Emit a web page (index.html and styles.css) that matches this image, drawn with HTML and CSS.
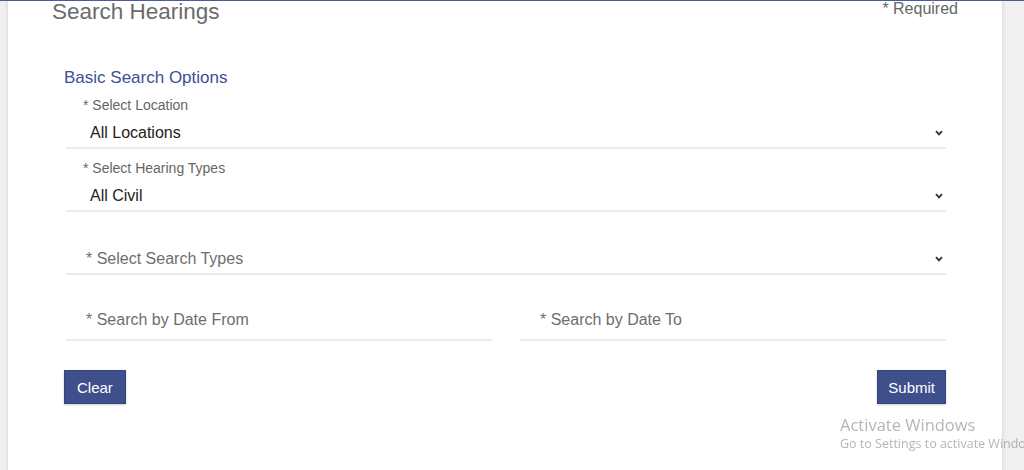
FILE: index.html
```html
<!DOCTYPE html>
<html lang="en">
<head>
  <meta charset="UTF-8" />
  <title>Search Hearings</title>
  <link rel="stylesheet" href="styles.css">
</head>
<body>
  <div class="card">
    <!-- Kopfzeile -->
    <div class="card-head">
      <h2 class="title">Search Hearings</h2>
      <span class="required">* Required</span>
    </div>

    <form class="search-form">
      <h3 class="section-title">Basic Search Options</h3>

      <div class="field">
        <label class="field-label">* Select Location</label>
        <div class="select-row">
          <span class="value">All Locations</span>
          <svg class="caret" viewBox="0 0 8 6" width="8" height="6"><polyline points="1,1.2 4,4.3 7,1.2" /></svg>
        </div>
      </div>

      <div class="field">
        <label class="field-label">* Select Hearing Types</label>
        <div class="select-row">
          <span class="value">All Civil</span>
          <svg class="caret" viewBox="0 0 8 6" width="8" height="6"><polyline points="1,1.2 4,4.3 7,1.2" /></svg>
        </div>
      </div>

      <div class="field field-empty">
        <div class="select-row">
          <span class="placeholder">* Select Search Types</span>
          <svg class="caret" viewBox="0 0 8 6" width="8" height="6"><polyline points="1,1.2 4,4.3 7,1.2" /></svg>
        </div>
      </div>

      <div class="date-row">
        <div class="date-field"><span class="placeholder">* Search by Date From</span></div>
        <div class="date-field"><span class="placeholder">* Search by Date To</span></div>
      </div>

      <div class="actions">
        <button type="button" class="btn">Clear</button>
        <button type="button" class="btn btn-submit">Submit</button>
      </div>
    </form>
  </div>

  <!-- Windows-Wasserzeichen -->
  <div class="watermark">
    <div class="wm-title">Activate Windows</div>
    <div class="wm-text">Go to Settings to activate Windows.</div>
  </div>
</body>
</html>
```

FILE: styles.css
```css
/* --- Grunddesign --- */
body {
  margin: 0;
  padding: 0;
  font-family: "Liberation Sans", Arial, sans-serif;
  background: #f0f0f0;
  border-top: 1px solid #4a5a9c;
  overflow: hidden;
}

/* --- Karte --- */
.card {
  margin: -1px 22px 0 8px;
  min-height: 480px;
  background: #fff;
  box-shadow: 0 0 4px rgba(0, 0, 0, 0.15);
}

.card-head {
  display: flex;
  justify-content: space-between;
  align-items: flex-start;
  padding: 0 44px;
}
.title {
  margin: 0;
  font-size: 22.5px;
  font-weight: normal;
  line-height: 24px;
  color: #6b6b6b;
}
.required {
  font-size: 16px;
  line-height: 18px;
  color: #666;
}

/* --- Formular --- */
.search-form {
  padding: 0 56px 0 58px;
}
.section-title {
  margin: 44px 0 8px -2px;
  font-size: 17px;
  font-weight: normal;
  line-height: 20px;
  color: #3d4f94;
}

.field {
  margin-bottom: 10px;
  border-bottom: 2px solid #ebebeb;
}
.field-label {
  display: block;
  padding-left: 17px;
  font-size: 14px;
  line-height: 18px;
  color: #666;
}
.select-row {
  display: flex;
  align-items: center;
  justify-content: space-between;
  padding: 9px 3px 4px 24px;
}
.value {
  font-size: 16px;
  line-height: 20px;
  color: #222;
}
.placeholder {
  font-size: 16px;
  line-height: 20px;
  color: #6e6e6e;
}
.field-empty .select-row {
  padding: 27px 3px 4px 20px;
}
.caret {
  fill: none;
  stroke: #333;
  stroke-width: 1.9;
}

/* --- Datumsfelder --- */
.date-row {
  display: grid;
  grid-template-columns: 1fr 1fr;
  gap: 28px;
}
.date-field {
  padding: 25px 0 9px 20px;
  border-bottom: 2px solid #ebebeb;
}

/* --- Buttons --- */
.actions {
  display: flex;
  justify-content: space-between;
  margin: 29px 0 0 -2px;
}
.btn {
  height: 34px;
  padding: 0 12px;
  border: 1px solid #34447e;
  background: #3f4f8c;
  color: #fff;
  font-family: inherit;
  font-size: 15px;
  box-shadow: 0 1px 2px rgba(0, 0, 0, 0.2);
}
.btn-submit {
  padding: 0 10px;
}

/* --- Wasserzeichen (liegt über allem) --- */
.watermark {
  position: fixed;
  left: 840px;
  top: 414px;
  white-space: nowrap;
  font-family: "Open Sans", "Noto Sans", sans-serif;
  color: rgba(120, 120, 120, 0.55);
}
.wm-title {
  font-size: 16.5px;
  line-height: 22px;
}
.wm-text {
  font-size: 12.5px;
  line-height: 16px;
}
```
